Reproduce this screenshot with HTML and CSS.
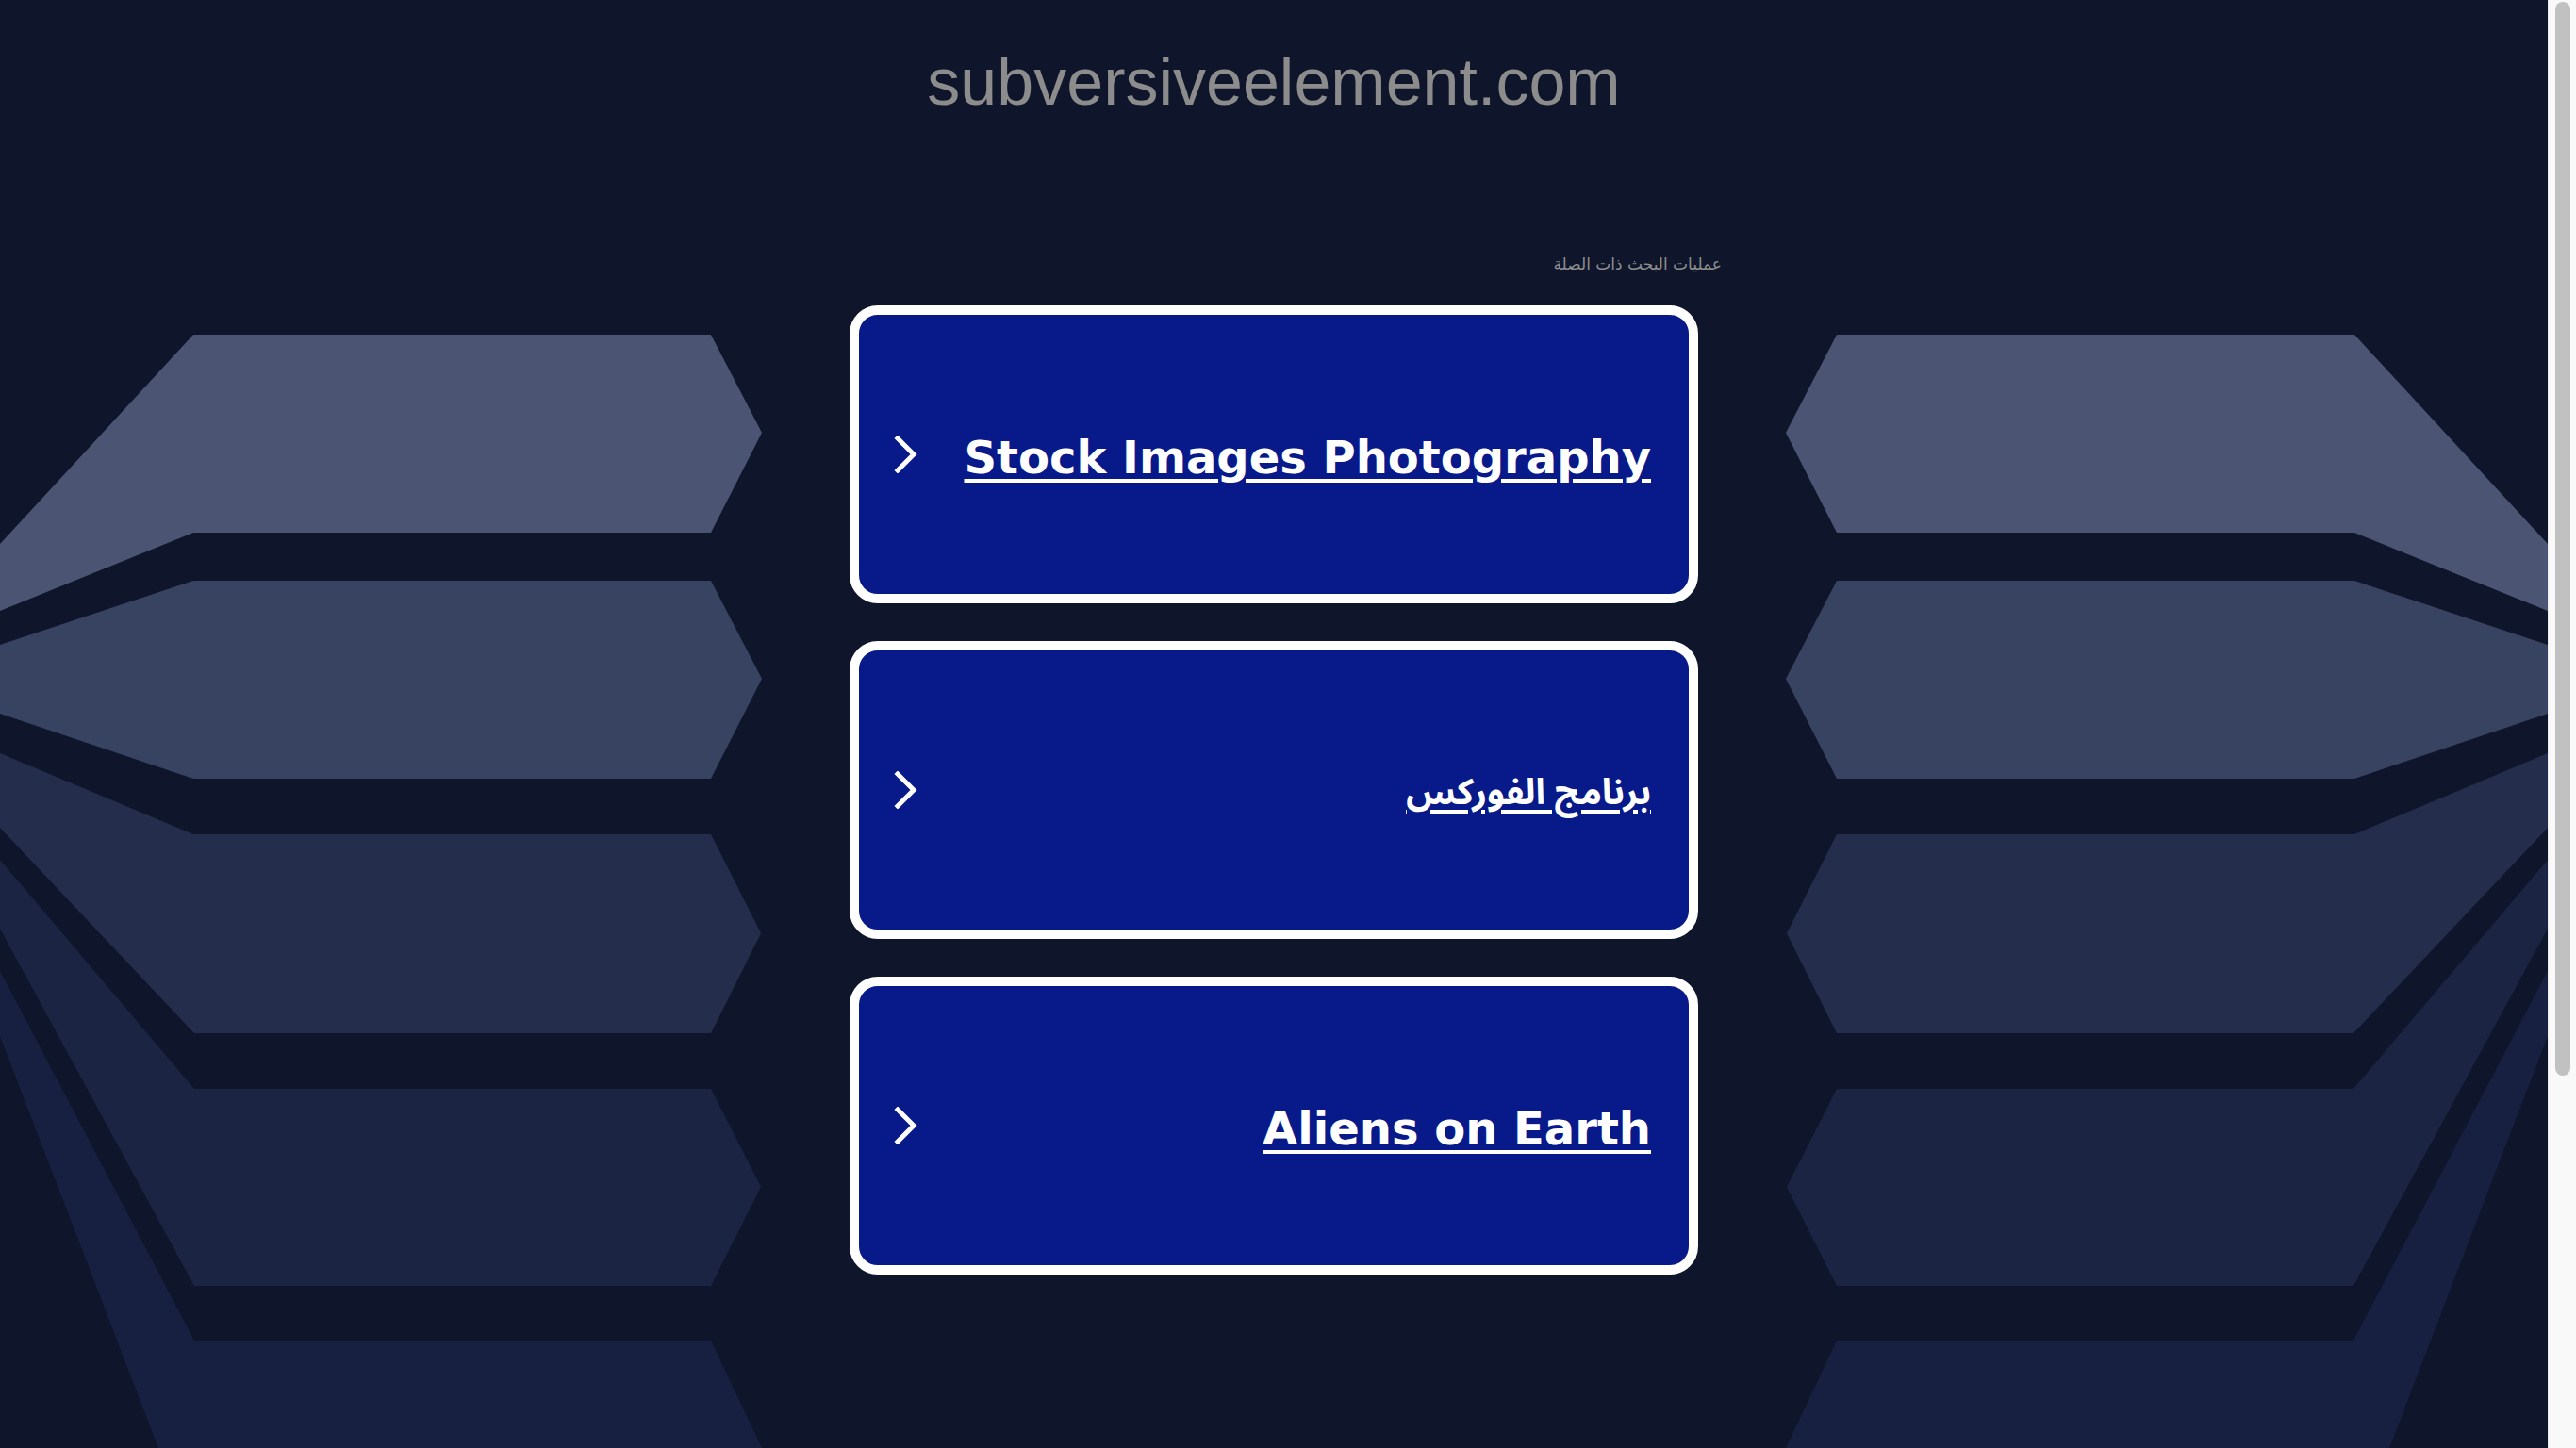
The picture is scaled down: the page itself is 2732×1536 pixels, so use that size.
FILE: index.html
```html
<!DOCTYPE html>
<html lang="en">
<head>
<meta charset="utf-8">
<title>subversiveelement.com</title>
<link rel="stylesheet" href="styles.css">
</head>
<body>
<div class="page">
  <div class="backdrop" aria-hidden="true">
    <svg class="side side-left" viewBox="0 0 810 1536" preserveAspectRatio="none">
      <polygon class="s1" points="0,577 205,355 754,355 808,459 754,565 205,565 0,648"/>
      <polygon class="s2" points="0,684 205,616 754,616 808,720 754,826 205,826 0,757"/>
      <polygon class="s3" points="0,799 205,885 754,885 807,990 754,1096 206,1096 0,878"/>
      <polygon class="s4" points="0,912 206,1155 754,1155 807,1259 754,1364 206,1364 0,985"/>
      <polygon class="s5" points="0,1030 206,1422 754,1422 808,1536 168,1536 0,1099"/>
    </svg>
    <svg class="side side-right" viewBox="0 0 810 1536" preserveAspectRatio="none">
      <polygon class="s1" points="0,577 205,355 754,355 808,459 754,565 205,565 0,648"/>
      <polygon class="s2" points="0,684 205,616 754,616 808,720 754,826 205,826 0,757"/>
      <polygon class="s3" points="0,799 205,885 754,885 807,990 754,1096 206,1096 0,878"/>
      <polygon class="s4" points="0,912 206,1155 754,1155 807,1259 754,1364 206,1364 0,985"/>
      <polygon class="s5" points="0,1030 206,1422 754,1422 808,1536 168,1536 0,1099"/>
    </svg>
  </div>

  <main class="content">
    <h1 class="domain">subversiveelement.com</h1>
    <section class="related">
      <p class="related-title" dir="rtl" lang="ar">عمليات البحث ذات الصلة</p>
      <ul class="cards">
        <li>
          <a class="card" href="#">
            <svg class="chevron" viewBox="0 0 26 40"><polyline points="4,3 21,20 4,37"/></svg>
            <span class="card-label">Stock Images Photography</span>
          </a>
        </li>
        <li>
          <a class="card" href="#">
            <svg class="chevron" viewBox="0 0 26 40"><polyline points="4,3 21,20 4,37"/></svg>
            <span class="card-label card-label-ar" dir="rtl" lang="ar">برنامج الفوركس</span>
          </a>
        </li>
        <li>
          <a class="card" href="#">
            <svg class="chevron" viewBox="0 0 26 40"><polyline points="4,3 21,20 4,37"/></svg>
            <span class="card-label">Aliens on Earth</span>
          </a>
        </li>
      </ul>
    </section>
  </main>
</div>
<div class="scrollbar" aria-hidden="true"><div class="scrollbar-thumb"></div></div>
</body>
</html>
```

FILE: styles.css
```css
html {
  background: #0f162b;
}

body {
  margin: 0;
  background: #0f162b;
  font-family: "Liberation Sans", Arial, sans-serif;
}

.page {
  position: relative;
  min-height: 2070px;
  margin-right: 30px;
}

.scrollbar {
  position: fixed;
  top: 0;
  right: 0;
  bottom: 0;
  width: 30px;
  box-sizing: border-box;
  background: #f9f9f9;
  border-left: 1px solid #ececec;
  z-index: 5;
}

.scrollbar-thumb {
  height: 1139px;
  margin: 2px 6px 0 7px;
  border-radius: 8px;
  background: #c1c1c1;
}

.backdrop {
  position: absolute;
  top: 0;
  left: 0;
  right: 0;
  height: 1536px;
  overflow: hidden;
  z-index: 0;
}

.side {
  position: absolute;
  top: 0;
  width: 810px;
  height: 1536px;
}

.side-left {
  left: 0;
}

.side-right {
  right: 0;
  transform: scaleX(-1);
}

.s1 { fill: #4b5573; }
.s2 { fill: #384261; }
.s3 { fill: #242d4b; }
.s4 { fill: #1b2443; }
.s5 { fill: #172040; }

.content {
  position: relative;
  z-index: 1;
  display: flex;
  flex-direction: column;
  align-items: center;
  padding-top: 47px;
}

.domain {
  margin: 0;
  font-family: "Liberation Sans", Arial, sans-serif;
  font-weight: 400;
  font-size: 70px;
  line-height: 80px;
  color: #8c8c8c;
}

.related {
  width: 950px;
  margin-top: 142px;
  display: flex;
  flex-direction: column;
  align-items: center;
}

.related-title {
  align-self: stretch;
  margin: 0 0 33px;
  font-family: "DejaVu Sans", sans-serif;
  font-size: 17px;
  line-height: 22px;
  text-align: right;
  color: #8e8e8e;
}

.cards {
  list-style: none;
  margin: 0;
  padding: 0;
  display: flex;
  flex-direction: column;
  gap: 40px;
}

.card {
  box-sizing: border-box;
  width: 900px;
  height: 316px;
  display: flex;
  align-items: center;
  padding: 0 40px 0 37px;
  border: 10px solid #ffffff;
  border-radius: 30px;
  background: #08198a;
  color: #ffffff;
  text-decoration: none;
}

.chevron {
  flex: none;
  width: 26px;
  height: 40px;
  fill: none;
  stroke: #ffffff;
  stroke-width: 5;
  stroke-linecap: square;
}

.card-label {
  flex: 1;
  margin-top: 6px;
  text-align: right;
  font-family: "DejaVu Sans", Verdana, sans-serif;
  font-weight: 700;
  font-size: 48px;
  color: #ffffff;
  text-decoration: underline;
  text-decoration-thickness: 4px;
  text-underline-offset: 6px;
}

.card-label-ar {
  font-family: "Noto Sans Arabic", "DejaVu Sans Condensed", "DejaVu Sans", sans-serif;
  font-size: 38px;
}
```
